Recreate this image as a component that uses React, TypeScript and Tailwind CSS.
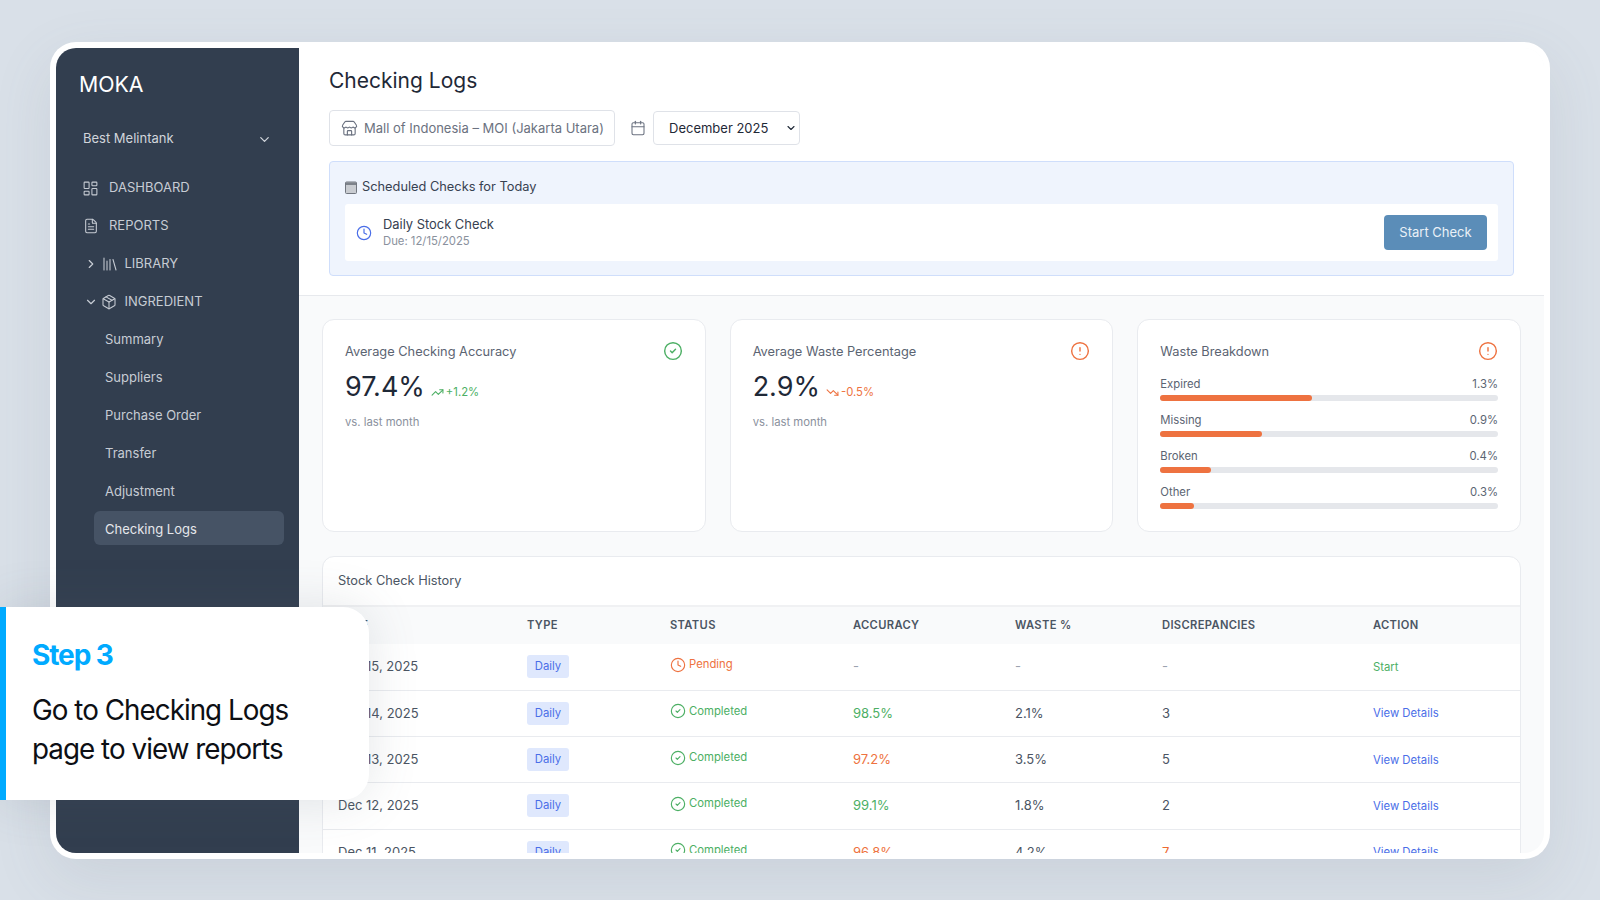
import React from "react";
import {
  LayoutDashboard, FileText, Library, Package, ChevronDown, ChevronRight, Store, Calendar,
  Clock, CircleCheck, CircleAlert, TrendingUp, TrendingDown,
} from "lucide-react";

const subItems = ["Summary", "Suppliers", "Purchase Order", "Transfer", "Adjustment"];

const bars = [
  { label: "Expired", value: "1.3%", width: "45%" },
  { label: "Missing", value: "0.9%", width: "30%" },
  { label: "Broken", value: "0.4%", width: "15%" },
  { label: "Other", value: "0.3%", width: "10%" },
];

const rows = [
  { date: "Dec 15, 2025", pending: true, acc: "-", accC: "text-[#9ca3af]", waste: "-", wasteC: "text-[#9ca3af]", disc: "-", discC: "text-[#9ca3af]", action: "Start", actionC: "text-[#4caf64]" },
  { date: "Dec 14, 2025", pending: false, acc: "98.5%", accC: "text-[#4caf64]", waste: "2.1%", wasteC: "text-[#4b5563]", disc: "3", discC: "text-[#4b5563]", action: "View Details", actionC: "text-[#4a6ee8]" },
  { date: "Dec 13, 2025", pending: false, acc: "97.2%", accC: "text-[#ee7240]", waste: "3.5%", wasteC: "text-[#4b5563]", disc: "5", discC: "text-[#4b5563]", action: "View Details", actionC: "text-[#4a6ee8]" },
  { date: "Dec 12, 2025", pending: false, acc: "99.1%", accC: "text-[#4caf64]", waste: "1.8%", wasteC: "text-[#4b5563]", disc: "2", discC: "text-[#4b5563]", action: "View Details", actionC: "text-[#4a6ee8]" },
  { date: "Dec 11, 2025", pending: false, acc: "96.8%", accC: "text-[#ee7240]", waste: "4.2%", wasteC: "text-[#4b5563]", disc: "7", discC: "text-[#ee6a30]", action: "View Details", actionC: "text-[#4a6ee8]" },
];

function StatCard({ title, value, delta, up, icon }: { title: string; value: string; delta: string; up: boolean; icon: React.ReactNode }) {
  return (
    <div className="bg-white border border-[#e9ebef] rounded-xl pl-[22px] pr-[22px] pt-[23px] h-[213px]">
      <div className="flex items-center justify-between h-[18px]">
        <span className="text-[12.8px] text-[#5b6472]">{title}</span>
        {icon}
      </div>
      <div className="flex items-center gap-[6px] mt-[7px] h-[36px]">
        <span className="text-[27px] text-[#1f2937] leading-none">{value}</span>
        <span className={`flex items-center gap-[2px] text-[11.3px] mt-[13px] ${up ? "text-[#4caf64]" : "text-[#ee7240]"}`}>
          {up ? <TrendingUp size={13} /> : <TrendingDown size={13} />}
          {delta}
        </span>
      </div>
      <div className="text-[11.3px] text-[#8a919d] mt-[10px]">vs. last month</div>
    </div>
  );
}

export default function App() {
  return (
    <div className="relative w-[1600px] h-[900px] overflow-hidden bg-[#d9e0e8] pl-[50px] pt-[42px] font-['Inter',sans-serif]">
      <div className="w-[1500px] h-[817px] bg-white rounded-[26px] p-[6px] shadow-[0_20px_60px_rgba(100,110,125,0.12)]">
        <div className="flex h-full overflow-hidden rounded-[20px]">
          {/* sidebar */}
          <aside className="w-[243px] shrink-0 bg-[#323e4f] pl-[23px] pr-[15px] flex flex-col">
            <div className="text-[21.3px] leading-[32px] text-white mt-[20px]">MOKA</div>
            <div className="flex items-center justify-between mt-[21px] pl-[4px] pr-[12px] h-[36px] text-[13px] text-[#d1d5db]">
              <span>Best Melintank</span>
              <ChevronDown size={15} />
            </div>
            <nav className="mt-[14px] flex flex-col gap-[4px] text-[13px] text-[#c7ccd4]">
              <div className="flex items-center gap-[10px] h-[34px] pl-[3px]">
                <LayoutDashboard size={17} strokeWidth={1.5} />
                <span>DASHBOARD</span>
              </div>
              <div className="flex items-center gap-[10px] h-[34px] pl-[3px]">
                <FileText size={16} strokeWidth={1.6} className="mx-[0.5px]" />
                <span>REPORTS</span>
              </div>
              <div className="flex items-center gap-[3px] h-[34px] pl-[5px]">
                <ChevronRight size={14} />
                <Library size={18} strokeWidth={1.4} />
                <span className="ml-[2.5px]">LIBRARY</span>
              </div>
              <div className="flex items-center gap-[3px] h-[34px] pl-[5px]">
                <ChevronDown size={14} />
                <Package size={16} strokeWidth={1.6} />
                <span className="ml-[4.5px]">INGREDIENT</span>
              </div>
              {subItems.map((s) => (
                <div key={s} className="flex items-center h-[34px] pl-[26px]">{s}</div>
              ))}
              <div className="flex items-center h-[34px] -mt-[2px] pt-[4px] ml-[15px] pl-[11px] rounded-md bg-[#465365] text-[#e5e7eb]">Checking Logs</div>
            </nav>
          </aside>

          {/* main */}
          <main className="flex-1 min-w-0 bg-[#f9fafb] overflow-hidden">
            <header className="bg-white border-b border-[#e7e9ed] px-[30px] pt-[17px] h-[248px]">
              <h1 className="text-[21px] leading-[32px] text-[#1f2937]">Checking Logs</h1>
              <div className="flex items-center mt-[13px]">
                <div className="flex items-center gap-[6px] w-[286px] h-[36px] pl-[11px] border border-[#dfe2e8] rounded-[4px] text-[13px] text-[#6b7280] whitespace-nowrap">
                  <Store size={17} strokeWidth={1.6} />
                  <span className="pt-[2px]">Mall of Indonesia – MOI (Jakarta Utara)</span>
                </div>
                <Calendar size={16} strokeWidth={1.6} className="ml-[15px] text-[#6b7280]" />
                <div className="flex items-center justify-between w-[147px] h-[34px] ml-[7px] pl-[15px] pr-[2px] border border-[#dfe2e8] rounded-[4px] text-[13px] text-[#1f2937]">
                  <span className="pt-[2px]">December 2025</span>
                  <ChevronDown size={12} strokeWidth={2.2} />
                </div>
              </div>
              <section className="mt-[15px] h-[115px] border border-[#cfdefb] bg-[#eff4fd] rounded-[4px] px-[15px] pt-[15px]">
                <div className="flex items-center gap-[5px] h-[20px] text-[12.8px] text-[#374151]">
                  <svg width="12" height="13" viewBox="0 0 12 13" className="shrink-0">
                    <rect x="0.5" y="1" width="11" height="11.5" rx="1" fill="#c9ccd1" stroke="#71767f" />
                    <rect x="1" y="1.5" width="10" height="2.5" fill="#7d828a" />
                  </svg>
                  <span>Scheduled Checks for Today</span>
                </div>
                <div className="flex items-center justify-between h-[57px] mt-[7px] bg-white rounded-[3px] pl-[11px] pr-[11px]">
                  <div className="flex items-center gap-[11px]">
                    <Clock size={16} strokeWidth={1.8} className="text-[#4a6ee8]" />
                    <div className="pb-[1px]">
                      <div className="text-[12.9px] leading-[18px] text-[#374151]">Daily Stock Check</div>
                      <div className="text-[11.3px] leading-[15px] text-[#8a919d]">Due: 12/15/2025</div>
                    </div>
                  </div>
                  <button className="w-[103px] h-[35px] rounded-[4px] bg-[#5b8db8] text-[13px] text-[#eaf1f7]">Start Check</button>
                </div>
              </section>
            </header>

            <div className="px-[23px] pt-[23px]">
              <div className="grid grid-cols-3 gap-[24px]">
                <StatCard
                  title="Average Checking Accuracy"
                  value="97.4%"
                  delta="+1.2%"
                  up
                  icon={<CircleCheck size={20} strokeWidth={1.7} className="-mt-[2px] text-[#4caf64]" />}
                />
                <StatCard
                  title="Average Waste Percentage"
                  value="2.9%"
                  delta="-0.5%"
                  up={false}
                  icon={<CircleAlert size={20} strokeWidth={1.7} className="-mt-[2px] text-[#ee7240]" />}
                />
                <div className="bg-white border border-[#e9ebef] rounded-xl pl-[22px] pr-[22px] pt-[23px] h-[213px]">
                  <div className="flex items-center justify-between h-[18px]">
                    <span className="text-[12.8px] text-[#5b6472]">Waste Breakdown</span>
                    <CircleAlert size={20} strokeWidth={1.7} className="-mt-[2px] text-[#ee7240]" />
                  </div>
                  <div className="mt-[13px] flex flex-col gap-[9px]">
                    {bars.map((b) => (
                      <div key={b.label}>
                        <div className="flex justify-between h-[20px] items-center text-[11.3px] text-[#5b6472]">
                          <span>{b.label}</span>
                          <span>{b.value}</span>
                        </div>
                        <div className="mt-[1px] h-[6px] rounded-full bg-[#e5e7eb]">
                          <div className="h-full rounded-full bg-[#ee7240]" style={{ width: b.width }} />
                        </div>
                      </div>
                    ))}
                  </div>
                </div>
              </div>

              <div className="mt-[24px] bg-white border border-[#e9ebef] rounded-xl">
                <div className="h-[50px] flex items-center pl-[15px] text-[12.8px] text-[#4b5563] border-b-2 border-[#f0f1f3]">Stock Check History</div>
                <table className="w-full table-fixed border-collapse">
                  <colgroup>
                    <col className="w-[188px]" />
                    <col className="w-[143px]" />
                    <col className="w-[183px]" />
                    <col className="w-[162px]" />
                    <col className="w-[147px]" />
                    <col className="w-[211px]" />
                    <col />
                  </colgroup>
                  <thead>
                    <tr className="h-[37px] bg-[#f9fafb] text-left text-[11.2px] font-semibold tracking-[0.03em] text-[#4b5563]">
                      <th className="pl-[15px] font-semibold">DATE</th>
                      <th className="pl-[16px] font-semibold">TYPE</th>
                      <th className="pl-[16px] font-semibold">STATUS</th>
                      <th className="pl-[16px] font-semibold">ACCURACY</th>
                      <th className="pl-[16px] font-semibold">WASTE %</th>
                      <th className="pl-[16px] font-semibold">DISCREPANCIES</th>
                      <th className="pl-[16px] font-semibold">ACTION</th>
                    </tr>
                  </thead>
                  <tbody>
                    {rows.map((r) => (
                      <tr key={r.date} className="h-[46.25px] border-t border-[#e9ebef] first:border-t-0 text-[13px] text-[#4b5563]">
                        <td className="pl-[15px]">{r.date}</td>
                        <td className="pl-[16px]">
                          <span className="inline-flex items-center justify-center w-[42px] h-[23px] rounded-[3px] bg-[#dfe8fd] text-[11.3px] text-[#4a6ee8]">Daily</span>
                        </td>
                        <td className="pl-[16px]">
                          <span className={`flex items-center gap-[3px] -mt-[4px] text-[11.3px] ${r.pending ? "text-[#ee7240]" : "text-[#4caf64]"}`}>
                            {r.pending ? <Clock size={16} strokeWidth={1.7} /> : <CircleCheck size={16} strokeWidth={1.7} />}
                            {r.pending ? "Pending" : "Completed"}
                          </span>
                        </td>
                        <td className={`pl-[16px] ${r.accC}`}>{r.acc}</td>
                        <td className={`pl-[16px] ${r.wasteC}`}>{r.waste}</td>
                        <td className={`pl-[16px] ${r.discC}`}>{r.disc}</td>
                        <td className={`pl-[16px] pt-[1px] text-[11.3px] ${r.actionC}`}>{r.action}</td>
                      </tr>
                    ))}
                  </tbody>
                </table>
              </div>
            </div>
          </main>
        </div>
      </div>

      {/* callout overlay */}
      <div className="absolute left-0 top-[607px] w-[369px] h-[193px] bg-white border-l-[6px] border-[#00aaff] rounded-r-[26px] pl-[26px] pt-[30px] shadow-[0_0_50px_rgba(90,100,115,0.16)]">
        <div className="text-[28px] leading-[36px] font-bold tracking-[-0.04em] text-[#00aaff]">Step 3</div>
        <div className="mt-[18px] text-[27.8px] leading-[39px] tracking-[-0.035em] text-[#0d0f14]">
          Go to Checking Logs
          <br />
          page to view reports
        </div>
      </div>
    </div>
  );
}
